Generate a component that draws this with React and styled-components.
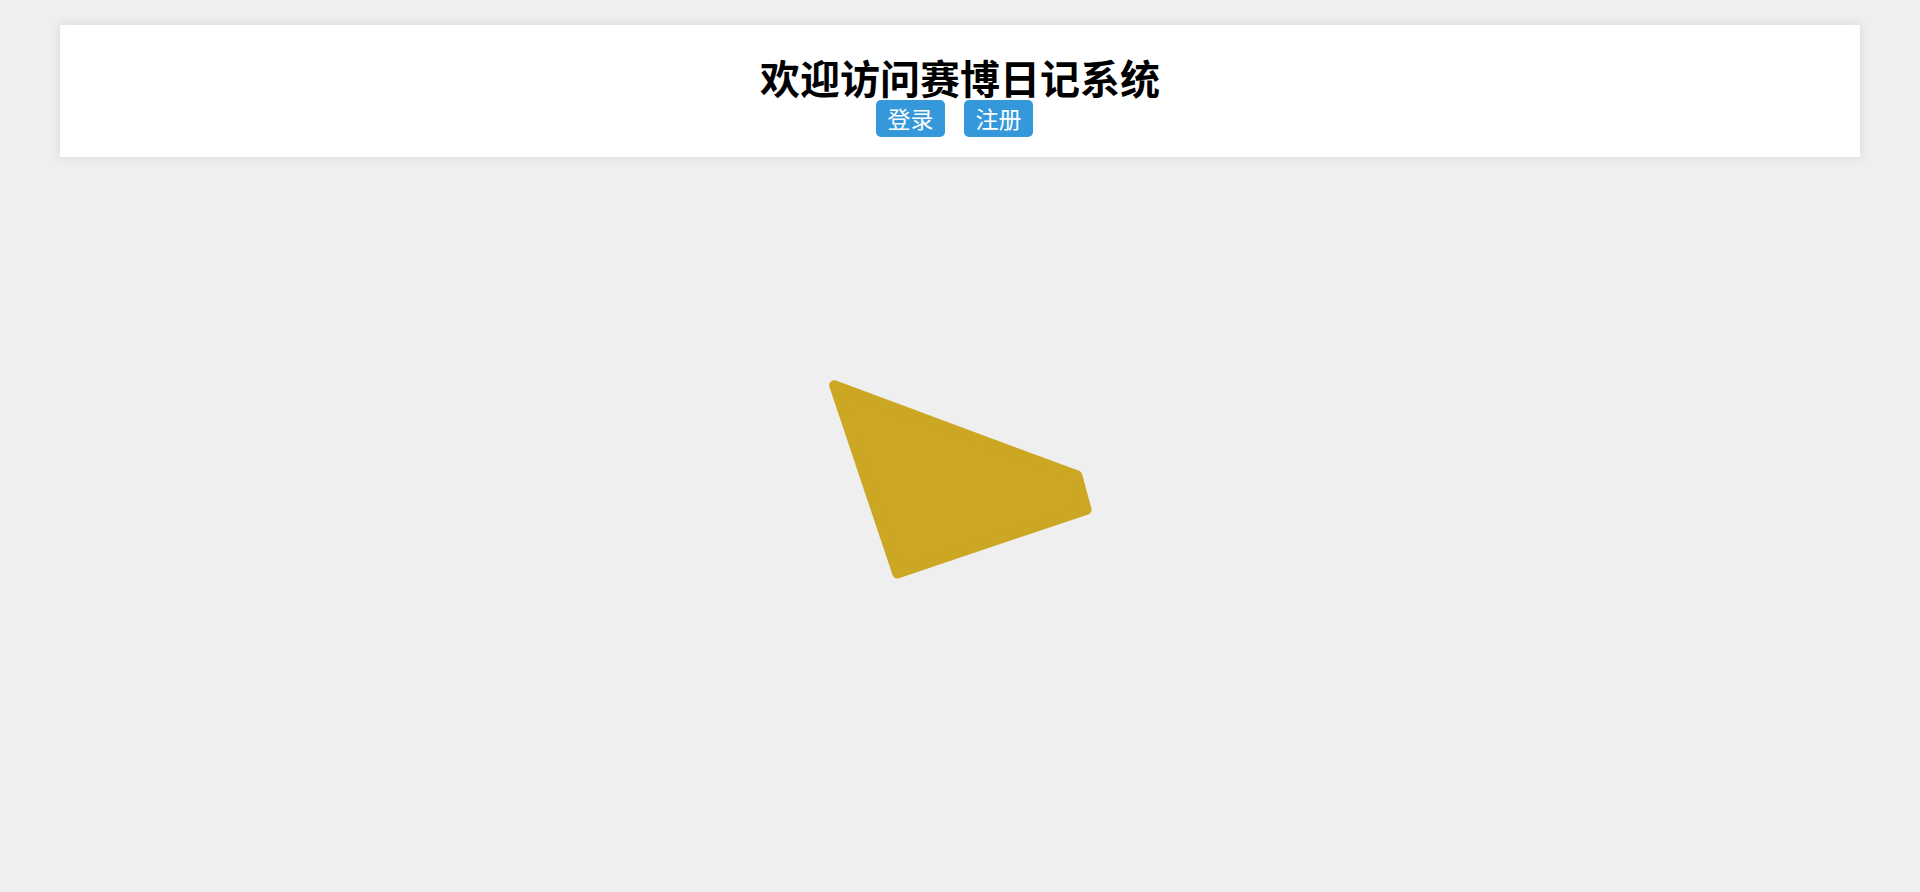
import React from "react";
import styled, { createGlobalStyle } from "styled-components";

const GlobalStyle = createGlobalStyle`
  body {
    margin: 0;
    background: #efefef;
    font-family: "Noto Sans CJK SC", "Noto Sans", sans-serif;
  }
`;

export default function App() {
  return (
    <Page>
      <GlobalStyle />
      <Header>
        <Title>欢迎访问赛博日记系统</Title>
        <ButtonRow>
          <NavButton>登录</NavButton>
          <NavButton>注册</NavButton>
        </ButtonRow>
      </Header>
      <Stage>
        <Shape width="268" height="206" viewBox="826 376 268 206">
          <polygon
            points="834.2,385.3 1077.3,475.5 1086.6,509.7 897.3,573.5"
            fill="#cca724"
            stroke="#cca724"
            strokeWidth="10"
            strokeLinejoin="round"
          />
        </Shape>
      </Stage>
    </Page>
  );
}

const Page = styled.div`
  padding: 25px 60px 0;
  min-height: 867px;
`;

const Header = styled.header`
  background: #fff;
  box-shadow: 0 0 10px rgba(0, 0, 0, 0.1);
  padding: 29px 0 20px;
  text-align: center;
`;

const Title = styled.h1`
  margin: 0;
  font-size: 40px;
  line-height: 46px;
  font-weight: 700;
  color: #000;
`;

const ButtonRow = styled.div`
  display: flex;
  justify-content: center;
  gap: 19px;
  padding-right: 11px;
`;

const NavButton = styled.button`
  background: #3498db;
  color: #fff;
  border: none;
  border-radius: 5px;
  font-family: "Noto Sans CJK SC", sans-serif;
  font-size: 23px;
  line-height: 37px;
  height: 37px;
  width: 69px;
  padding: 0;
  cursor: pointer;
`;

const Stage = styled.main`
  display: flex;
  justify-content: center;
  padding-top: 219px;
`;

const Shape = styled.svg`
  display: block;
`;
